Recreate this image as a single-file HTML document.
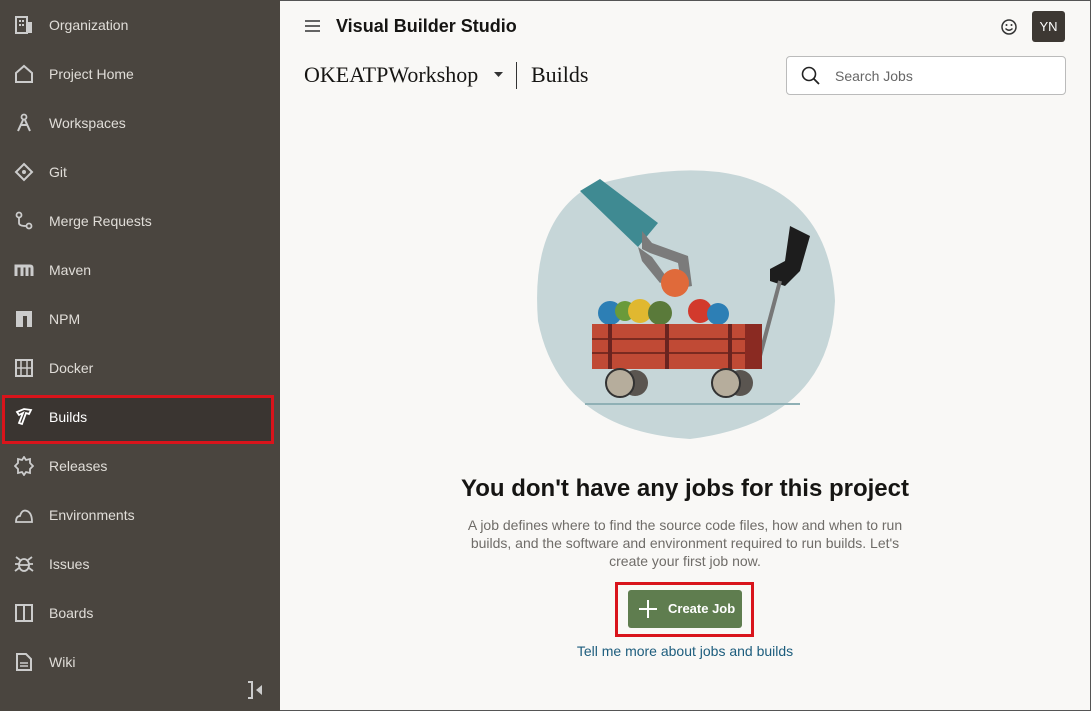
<!DOCTYPE html>
<html><head><meta charset="utf-8"><style>
*{margin:0;padding:0;box-sizing:border-box}
body{width:1091px;height:711px;overflow:hidden;font-family:"Liberation Sans",sans-serif;background:#f9f8f6;position:relative}
#side{position:absolute;left:0;top:0;width:280px;height:711px;background:#4a453f}
.it{position:absolute;left:0;width:280px;height:30px;color:#e0ddd8;font-size:14px;line-height:30px}
.it span{position:absolute;left:49px}
.it svg{position:absolute;left:14px;top:5px}
#sel{position:absolute;left:2px;top:395px;width:272px;height:49px;background:#3a3531;border:3px solid #d9141b}
#main{position:absolute;left:280px;top:0;right:0;bottom:0;border-top:1px solid #555;border-right:1px solid #555;border-bottom:1px solid #555}
</style></head><body>
<div id="side">
<div id="sel"></div>
<div class="it" style="top:10px"><svg width="20" height="20"><rect x="2" y="2" width="11" height="16" fill="none" stroke="#ccc" stroke-width="2"/><rect x="13" y="7" width="5" height="11" fill="#ccc"/><rect x="5" y="5" width="2" height="2" fill="#ccc"/><rect x="8" y="5" width="2" height="2" fill="#ccc"/><rect x="5" y="9" width="2" height="2" fill="#ccc"/><rect x="8" y="9" width="2" height="2" fill="#ccc"/></svg><span>Organization</span></div>
<div class="it" style="top:59px"><svg width="20" height="20"><path d="M2 9 L10 2 L18 9 V18 H2Z" fill="none" stroke="#ccc" stroke-width="2"/></svg><span>Project Home</span></div>
<div class="it" style="top:108px"><svg width="20" height="20"><circle cx="10" cy="4" r="2.5" fill="none" stroke="#ccc" stroke-width="1.8"/><path d="M9 7 L4 18 M11 7 L16 18 M6 12 H14" stroke="#ccc" stroke-width="2"/></svg><span>Workspaces</span></div>
<div class="it" style="top:157px"><svg width="20" height="20"><path d="M10 2 L18 10 L10 18 L2 10Z" fill="none" stroke="#ccc" stroke-width="2"/><circle cx="10" cy="10" r="2" fill="#ccc"/></svg><span>Git</span></div>
<div class="it" style="top:206px"><svg width="20" height="20"><circle cx="5" cy="4" r="2.5" fill="none" stroke="#ccc" stroke-width="1.8"/><circle cx="15" cy="15" r="2.5" fill="none" stroke="#ccc" stroke-width="1.8"/><path d="M5 7 V12 Q5 15 12 15" fill="none" stroke="#ccc" stroke-width="1.8"/></svg><span>Merge Requests</span></div>
<div class="it" style="top:255px"><svg width="20" height="20"><path d="M2 16 V6 H16 Q18 6 18 8 V16 M8 6 V16 M13 6 V16" fill="none" stroke="#ccc" stroke-width="3"/></svg><span>Maven</span></div>
<div class="it" style="top:304px"><svg width="20" height="20"><path d="M2 2 H18 V18 H13 V7 H9 V18 H2Z" fill="#ccc"/></svg><span>NPM</span></div>
<div class="it" style="top:353px"><svg width="20" height="20"><rect x="2" y="2" width="16" height="16" fill="none" stroke="#ccc" stroke-width="2"/><path d="M2 10 H18 M7 2 V18 M13 2 V18" stroke="#ccc" stroke-width="1.5"/></svg><span>Docker</span></div>
<div class="it" style="top:402px;color:#fff"><svg width="20" height="20"><path d="M3 5 L10 2 L17 3 L15 7 L12 6 L8 17 L5 16 L9 6 L5 8Z" fill="none" stroke="#fff" stroke-width="1.8"/></svg><span>Builds</span></div>
<div class="it" style="top:451px"><svg width="20" height="20"><path d="M10 1 L12 4 L16 3 L16 7 L19 10 L16 13 L16 17 L12 16 L10 19 L8 16 L4 17 L4 13 L1 10 L4 7 L4 3 L8 4Z" fill="none" stroke="#ccc" stroke-width="1.8"/></svg><span>Releases</span></div>
<div class="it" style="top:500px"><svg width="20" height="20"><path d="M2 17 Q2 11 6 11 Q8 4 13 6 Q18 8 18 17Z" fill="none" stroke="#ccc" stroke-width="1.8"/></svg><span>Environments</span></div>
<div class="it" style="top:549px"><svg width="20" height="20"><ellipse cx="10" cy="11" rx="5" ry="6" fill="none" stroke="#ccc" stroke-width="1.8"/><path d="M5 10 H1 M15 10 H19 M5 14 L1 17 M15 14 L19 17 M6 6 L2 3 M14 6 L18 3 M5 11 H15" stroke="#ccc" stroke-width="1.8"/></svg><span>Issues</span></div>
<div class="it" style="top:598px"><svg width="20" height="20"><rect x="2" y="2" width="16" height="16" fill="none" stroke="#ccc" stroke-width="2"/><path d="M10 2 V18" stroke="#ccc" stroke-width="2"/></svg><span>Boards</span></div>
<div class="it" style="top:647px"><svg width="20" height="20"><path d="M3 2 H12 L17 7 V18 H3Z" fill="none" stroke="#ccc" stroke-width="2"/><path d="M6 11 H14 M6 14 H14" stroke="#ccc" stroke-width="1.5"/></svg><span>Wiki</span></div>
<svg style="position:absolute;left:246px;top:680px" width="20" height="20"><path d="M2 2 H6 V18 H2" fill="none" stroke="#ccc" stroke-width="2"/><path d="M16 5 L10 10 L16 15Z" fill="#ccc"/></svg>
</div>
<div id="main">
<svg style="position:absolute;left:25px;top:18px" width="16" height="14"><path d="M0 2 H15 M0 7 H15 M0 12 H15" stroke="#333" stroke-width="1.6"/></svg>
<div style="position:absolute;left:56px;top:15px;font-size:18px;font-weight:bold;color:#161513">Visual Builder Studio</div>
<svg style="position:absolute;left:720px;top:17px" width="18" height="18"><circle cx="9" cy="9" r="7" fill="none" stroke="#333" stroke-width="1.5"/><circle cx="6.5" cy="7" r="1" fill="#333"/><circle cx="11.5" cy="7" r="1" fill="#333"/><path d="M5.5 10.5 Q9 14 12.5 10.5" fill="none" stroke="#333" stroke-width="1.3"/></svg>
<div style="position:absolute;left:752px;top:10px;width:33px;height:31px;background:#3d3833;color:#fff;font-size:13px;line-height:31px;text-align:center;border-radius:3px">YN</div>
<div style="position:absolute;left:24px;top:61px;font-family:'Liberation Serif',serif;font-size:22px;color:#161513">OKEATPWorkshop</div>
<svg style="position:absolute;left:214px;top:71px" width="10" height="6"><path d="M0 0 H9 L4.5 5Z" fill="#333"/></svg>
<div style="position:absolute;left:236px;top:61px;width:1px;height:27px;background:#333"></div>
<div style="position:absolute;left:251px;top:61px;font-family:'Liberation Serif',serif;font-size:22px;color:#161513">Builds</div>
<div style="position:absolute;left:506px;top:55px;width:280px;height:39px;border:1px solid #bbb;border-radius:4px;background:#fff"></div>
<svg style="position:absolute;left:520px;top:64px" width="22" height="22"><circle cx="9" cy="9" r="6.5" fill="none" stroke="#222" stroke-width="1.6"/><path d="M13.5 13.5 L19 19" stroke="#222" stroke-width="1.8"/></svg>
<div style="position:absolute;left:555px;top:67px;font-size:14px;color:#666">Search Jobs</div>
<svg style="position:absolute;left:250px;top:160px" width="310" height="280">
<path d="M60 25 Q150 0 210 15 Q300 40 305 140 Q300 260 160 278 Q30 270 8 160 Q0 60 60 25Z" fill="#c6d6d8"/>
<path d="M50 30 L70 18 L128 62 L108 86Z" fill="#3f8a92"/>
<path d="M112 70 L122 82 L158 95 L162 125 L152 127 L148 102 L120 92 L112 88 Z" fill="#7b7b7b"/>
<path d="M108 86 L112 100 L130 122 L138 118 L122 96 Z" fill="#7b7b7b"/>
<circle cx="145" cy="122" r="14" fill="#e06a3a"/>
<path d="M260 65 L280 75 L270 110 L255 125 L240 120 L240 108 L255 100Z" fill="#1d1d1d"/>
<path d="M250 120 L230 195" stroke="#777" stroke-width="4"/>
<circle cx="80" cy="152" r="12" fill="#2d7fb5"/><circle cx="95" cy="150" r="10" fill="#6a9a3a"/><circle cx="110" cy="150" r="12" fill="#e0b830"/><circle cx="130" cy="152" r="12" fill="#5a7a3a"/><circle cx="170" cy="150" r="12" fill="#d23a2c"/><circle cx="188" cy="153" r="11" fill="#2d7fb5"/>
<rect x="62" y="163" width="170" height="45" fill="#c04a35"/>
<path d="M62 178 H232 M62 192 H232" stroke="#7a2a20" stroke-width="2"/>
<path d="M80 163 V208 M137 163 V208 M200 163 V208" stroke="#6a2420" stroke-width="4"/>
<rect x="215" y="163" width="17" height="45" fill="#8a2a22"/>
<circle cx="105" cy="222" r="13" fill="#5a5550"/><circle cx="90" cy="222" r="14" fill="#b6ad9c" stroke="#333" stroke-width="2"/>
<circle cx="210" cy="222" r="13" fill="#5a5550"/><circle cx="196" cy="222" r="14" fill="#b6ad9c" stroke="#333" stroke-width="2"/>
<path d="M55 243 H270" stroke="#8fb0b5" stroke-width="2"/>
</svg>
<div style="position:absolute;left:0;width:810px;top:474px;text-align:center;font-size:24px;font-weight:bold;color:#161513">You don't have any jobs for this project</div>
<div style="position:absolute;left:175px;width:460px;top:515px;text-align:center;font-size:14px;line-height:18px;color:#6f6c68">A job defines where to find the source code files, how and when to run builds, and the software and environment required to run builds. Let's create your first job now.</div>
<div style="position:absolute;left:335px;top:581px;width:139px;height:55px;border:3px solid #d9141b"></div>
<div style="position:absolute;left:348px;top:589px;width:114px;height:38px;background:#5f7d4f;border-radius:3px;color:#fff;font-size:13px;font-weight:bold;line-height:38px"><svg style="position:absolute;left:11px;top:10px" width="18" height="18"><path d="M9 0 V18 M0 9 H18" stroke="#fff" stroke-width="2"/></svg><span style="position:absolute;left:40px">Create Job</span></div>
<div style="position:absolute;left:0;width:810px;top:642px;text-align:center;font-size:14px;color:#1d5d7d">Tell me more about jobs and builds</div>
</div>
</body></html>
